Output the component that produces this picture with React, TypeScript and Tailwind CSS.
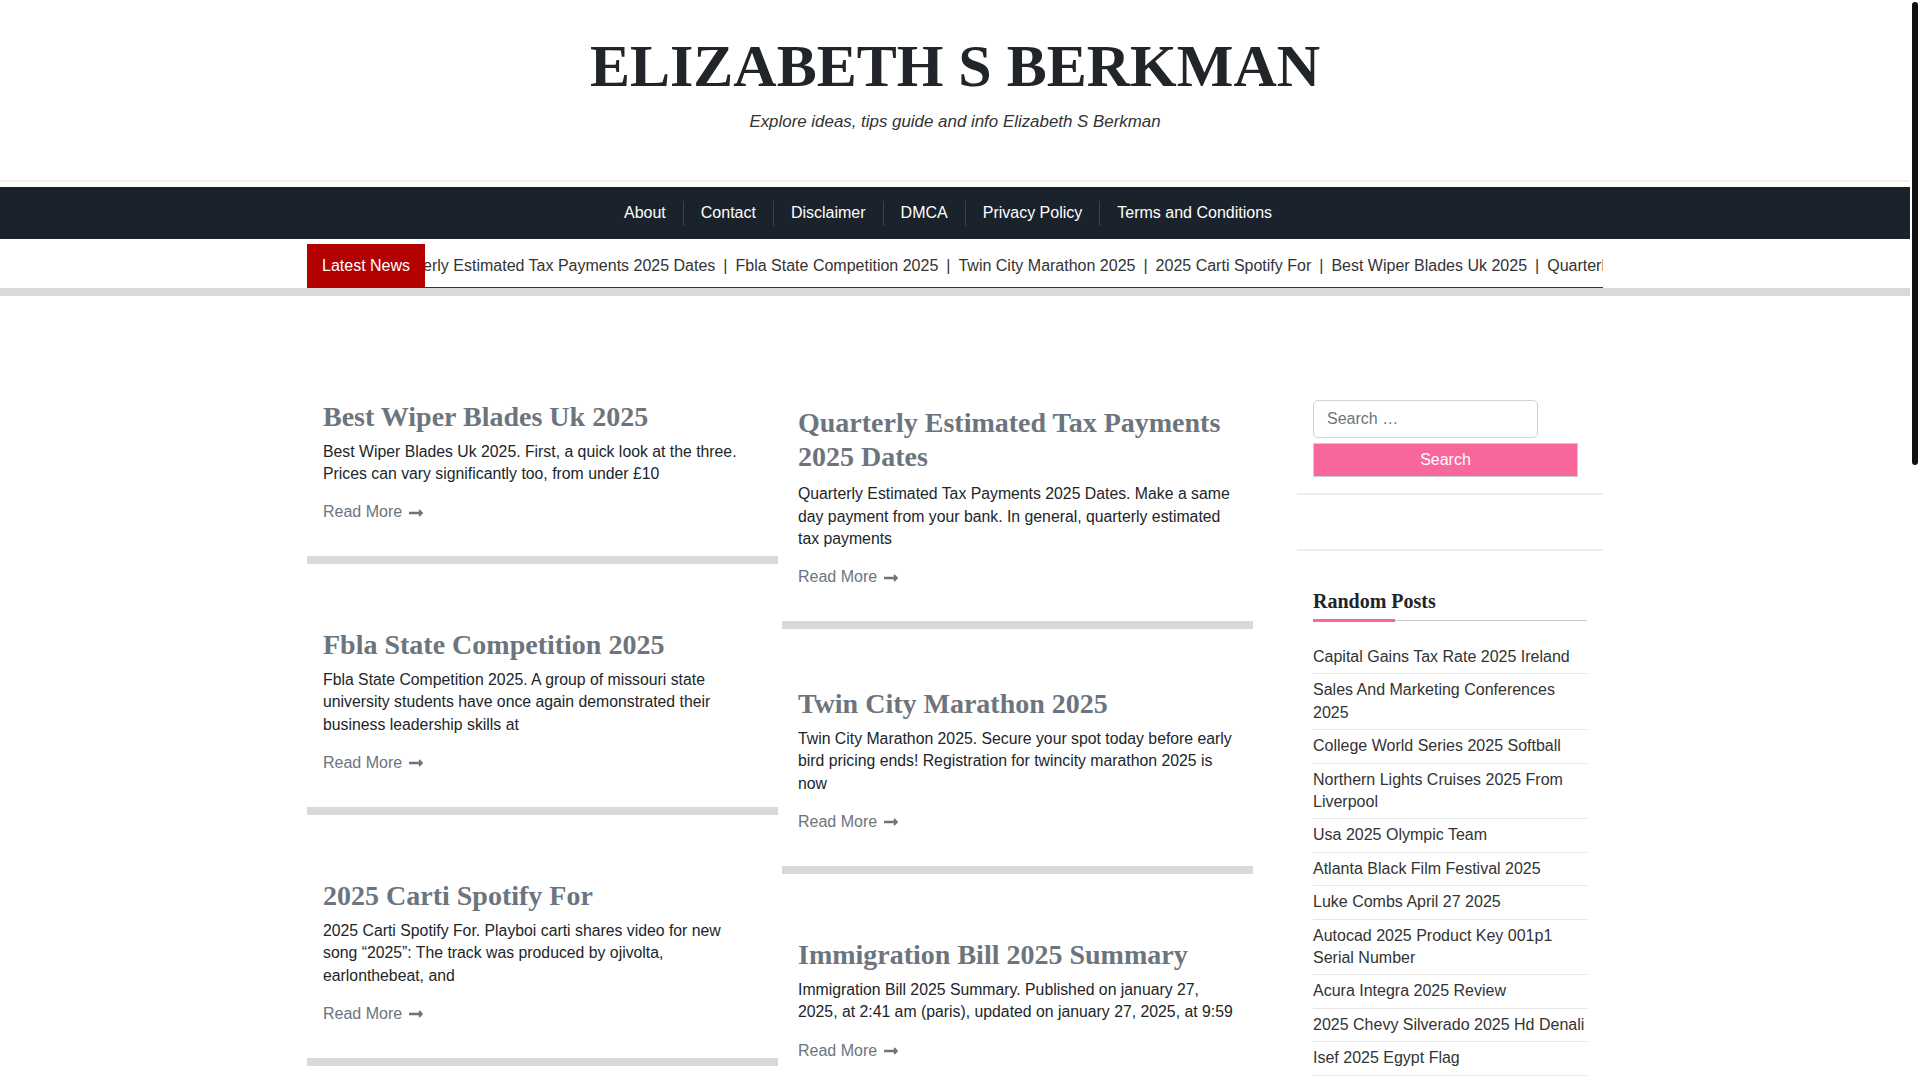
import { FaLongArrowAltRight } from 'react-icons/fa'

const menu = ['About', 'Contact', 'Disclaimer', 'DMCA', 'Privacy Policy', 'Terms and Conditions']

const ticker = [
  'Quarterly Estimated Tax Payments 2025 Dates',
  'Fbla State Competition 2025',
  'Twin City Marathon 2025',
  '2025 Carti Spotify For',
  'Best Wiper Blades Uk 2025',
  'Quarterly Estimated Tax Payments 2025 Dates',
]

type Post = { title: string; excerpt: string }

const leftPosts: Post[] = [
  {
    title: 'Best Wiper Blades Uk 2025',
    excerpt: 'Best Wiper Blades Uk 2025. First, a quick look at the three. Prices can vary significantly too, from under £10',
  },
  {
    title: 'Fbla State Competition 2025',
    excerpt:
      'Fbla State Competition 2025. A group of missouri state university students have once again demonstrated their business leadership skills at',
  },
  {
    title: '2025 Carti Spotify For',
    excerpt:
      '2025 Carti Spotify For. Playboi carti shares video for new song \u201c2025\u201d: The track was produced by ojivolta, earlonthebeat, and',
  },
]

const rightPosts: Post[] = [
  {
    title: 'Quarterly Estimated Tax Payments 2025 Dates',
    excerpt:
      'Quarterly Estimated Tax Payments 2025 Dates. Make a same day payment from your bank. In general, quarterly estimated tax payments',
  },
  {
    title: 'Twin City Marathon 2025',
    excerpt:
      'Twin City Marathon 2025. Secure your spot today before early bird pricing ends! Registration for twincity marathon 2025 is now',
  },
  {
    title: 'Immigration Bill 2025 Summary',
    excerpt:
      'Immigration Bill 2025 Summary. Published on january 27, 2025, at 2:41 am (paris), updated on january 27, 2025, at 9:59',
  },
]

const randomPosts = [
  'Capital Gains Tax Rate 2025 Ireland',
  'Sales And Marketing Conferences 2025',
  'College World Series 2025 Softball',
  'Northern Lights Cruises 2025 From Liverpool',
  'Usa 2025 Olympic Team',
  'Atlanta Black Film Festival 2025',
  'Luke Combs April 27 2025',
  'Autocad 2025 Product Key 001p1 Serial Number',
  'Acura Integra 2025 Review',
  '2025 Chevy Silverado 2025 Hd Denali',
  'Isef 2025 Egypt Flag',
  'Best Time To Visit Japan 2025',
  'Nfl Draft 2025 Mock Draft',
]

function PostCard({
  post,
  className = '',
  excerptGap = 'mt-[7px]',
}: {
  post: Post
  className?: string
  excerptGap?: string
}) {
  return (
    <article className={`border-b-[8px] border-[#d9d9d9] pb-[32px] pl-4 pt-[40px] ${className}`}>
      <h2 className="font-['Liberation_Serif','Times_New_Roman',serif] text-[28px] font-bold leading-[1.2] text-[#6c757d]">
        {post.title}
      </h2>
      <p className={`${excerptGap} text-[15.8px] leading-[22.4px] text-[#212529]`}>{post.excerpt}</p>
      <a href="#" className="mt-4 inline-flex items-center text-[16px] leading-[22.4px] text-[#6c757d]">
        Read More
        <FaLongArrowAltRight className="ml-[6px] text-[16px]" />
      </a>
    </article>
  )
}

export default function App() {
  return (
    <div className="flex h-screen bg-white font-['Liberation_Sans',Arial,sans-serif] text-[#212529]">
      <div className="h-screen w-[1910px] shrink-0 overflow-y-auto [&::-webkit-scrollbar]:hidden">
        {/* site branding */}
        <header className="pb-[46px] pt-[30px] text-center">
          <h1 className="font-['Liberation_Serif','Times_New_Roman',serif] text-[60px] font-bold leading-[72px] text-[#212529]">
            ELIZABETH S BERKMAN
          </h1>
          <p className="mt-[7px] text-[16.9px] italic leading-[25px] text-[#333]">
            Explore ideas, tips guide and info Elizabeth S Berkman
          </p>
        </header>
        <div className="h-[2px] bg-[#f6f1e6]" />

        {/* primary menu */}
        <nav className="mt-[5px] flex h-[52px] items-center justify-center bg-[#1a222b] pr-[14px]">
          <ul className="flex items-center">
            {menu.map((item, i) => (
              <li
                key={item}
                className={`flex h-[25px] items-center px-[17px] text-[16px] text-white ${i > 0 ? 'border-l border-[#3a434d]' : ''}`}
              >
                {item}
              </li>
            ))}
          </ul>
        </nav>

        {/* latest news ticker */}
        <div className="mx-auto mt-[5px] flex h-[44px] w-[1296px] border-b border-[#b30000]">
          <div className="flex items-center bg-[#b30000] px-[15px] text-[16px] text-white">Latest News</div>
          <div className="flex flex-1 items-center overflow-hidden">
            <div className="ml-[-42px] flex shrink-0 items-center whitespace-nowrap text-[16px] text-[#333]">
              {ticker.map((t, i) => (
                <span key={i} className="flex items-center">
                  {i > 0 && <span className="mx-2">|</span>}
                  {t}
                </span>
              ))}
            </div>
          </div>
        </div>
        <div className="h-[8px] bg-[#d9d9d9]" />

        <main className="mx-auto flex w-[1296px] items-start gap-[44px] pb-[120px] pt-[64px]">
          <div className="flex w-[946px] items-start gap-[4px]">
            <div className="flex w-[471px] flex-col gap-[24px]">
              {leftPosts.map((p) => (
                <PostCard key={p.title} post={p} className="pr-[20px]" />
              ))}
            </div>
            <div className="flex w-[471px] flex-col gap-[24px]">
              {rightPosts.map((p, i) =>
                i === 0 ? (
                  <PostCard key={p.title} post={p} className="translate-y-[6px] pr-[14px]" excerptGap="mt-[10px]" />
                ) : (
                  <PostCard key={p.title} post={p} className="pr-[14px]" />
                ),
              )}
            </div>
          </div>

          <aside className="w-[306px]">
            <section className="border-b-2 border-[#eeeeee] px-4 pb-[16px] pt-[40px]">
              <input
                type="search"
                placeholder="Search …"
                className="h-[38px] w-[225px] rounded-[5px] border border-[#ced4da] px-[13px] text-[16px] text-[#212529] placeholder:text-[#6c757d] focus:outline-none"
              />
              <button className="mt-[5px] block h-[34px] w-[265px] border border-[#cccccc] bg-[#f8669b] text-[16px] text-white">
                Search
              </button>
            </section>
            <section className="h-[56px] border-b-2 border-[#eeeeee]" />
            <section className="px-4 pt-[38px]">
              <h3 className="font-['Liberation_Serif','Times_New_Roman',serif] text-[20px] font-bold leading-[24px] text-[#212529]">
                Random Posts
              </h3>
              <div className="relative mt-[6px] h-[3px]">
                <div className="absolute inset-x-0 top-[1px] h-px bg-[#cccccc]" />
                <div className="absolute left-0 top-0 h-[3px] w-[82px] bg-[#f8669b]" />
              </div>
              <ul className="mt-[19px]">
                {randomPosts.map((r) => (
                  <li key={r} className="border-b border-[#e6e6e6] py-[5px] text-[16px] leading-[22.4px] text-[#333]">
                    <a href="#">{r}</a>
                  </li>
                ))}
              </ul>
            </section>
          </aside>
        </main>

        <footer className="h-[900px] bg-[#1a222b]" />
      </div>

      {/* page scrollbar */}
      <div className="h-screen w-[10px] shrink-0 bg-white px-[2px] pt-[2px]">
        <div className="h-[463px] rounded-full bg-[#111]" />
      </div>
    </div>
  )
}
